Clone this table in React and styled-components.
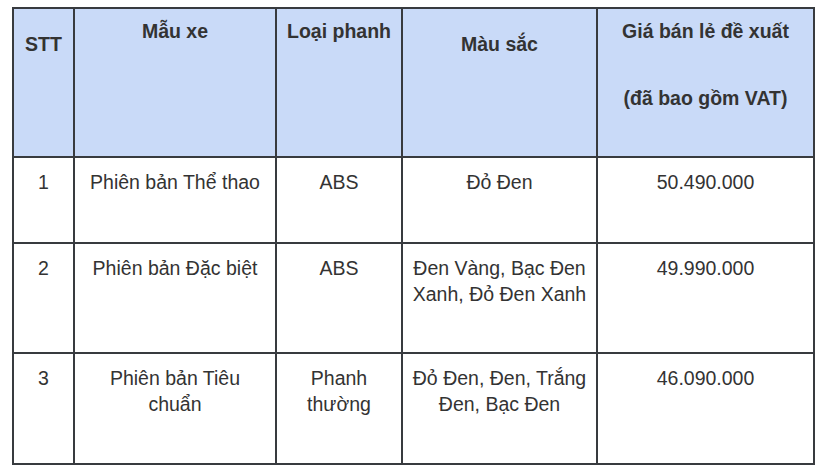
import styled, { createGlobalStyle } from "styled-components";

const GlobalStyle = createGlobalStyle`
  body {
    margin: 0;
    background: #ffffff;
    font-family: "Liberation Sans", Arial, sans-serif;
    color: #333333;
  }
`;

const rows = [
  { no: "1", model: "Phiên bản Thể thao", brake: "ABS", colors: "Đỏ Đen", price: "50.490.000", height: 86 },
  { no: "2", model: "Phiên bản Đặc biệt", brake: "ABS", colors: "Đen Vàng, Bạc Đen Xanh, Đỏ Đen Xanh", price: "49.990.000", height: 110 },
  { no: "3", model: "Phiên bản Tiêu chuẩn", brake: "Phanh thường", colors: "Đỏ Đen, Đen, Trắng Đen, Bạc Đen", price: "46.090.000", height: 111 },
];

function App() {
  return (
    <Page>
      <GlobalStyle />
      <Table>
        <colgroup>
          <col style={{ width: 61 }} />
          <col style={{ width: 202 }} />
          <col style={{ width: 126 }} />
          <col style={{ width: 195 }} />
          <col style={{ width: 217 }} />
        </colgroup>
        <thead>
          <HeadRow>
            <Th $top={22}>STT</Th>
            <Th>Mẫu xe</Th>
            <Th>Loại phanh</Th>
            <Th $top={22}>Màu sắc</Th>
            <Th>
              <HeadLine>Giá bán lẻ đề xuất</HeadLine>
              <HeadLine $gap>(đã bao gồm VAT)</HeadLine>
            </Th>
          </HeadRow>
        </thead>
        <tbody>
          {rows.map((r) => (
            <tr key={r.no} style={{ height: r.height }}>
              <Td>{r.no}</Td>
              <Td>{r.model}</Td>
              <Td>{r.brake}</Td>
              <Td>{r.colors}</Td>
              <Td>{r.price}</Td>
            </tr>
          ))}
        </tbody>
      </Table>
    </Page>
  );
}

const Page = styled.div`
  padding: 7px 12px;
`;

const Table = styled.table`
  border-collapse: collapse;
  table-layout: fixed;
  width: 801px;
  font-size: 19.5px;
  line-height: 26px;
`;

const HeadRow = styled.tr`
  height: 149px;
  background: #c9daf8;
`;

const Th = styled.th`
  border: 2px solid #383b3f;
  vertical-align: top;
  text-align: center;
  font-weight: 700;
  color: #333333;
  padding: ${(p) => p.$top || 9}px 6px 0;
`;

const HeadLine = styled.div`
  margin-top: ${(p) => (p.$gap ? "41px" : "0")};
`;

const Td = styled.td`
  border: 2px solid #383b3f;
  vertical-align: top;
  text-align: center;
  color: #333333;
  padding: 11px 6px 0;
`;

export default App;
